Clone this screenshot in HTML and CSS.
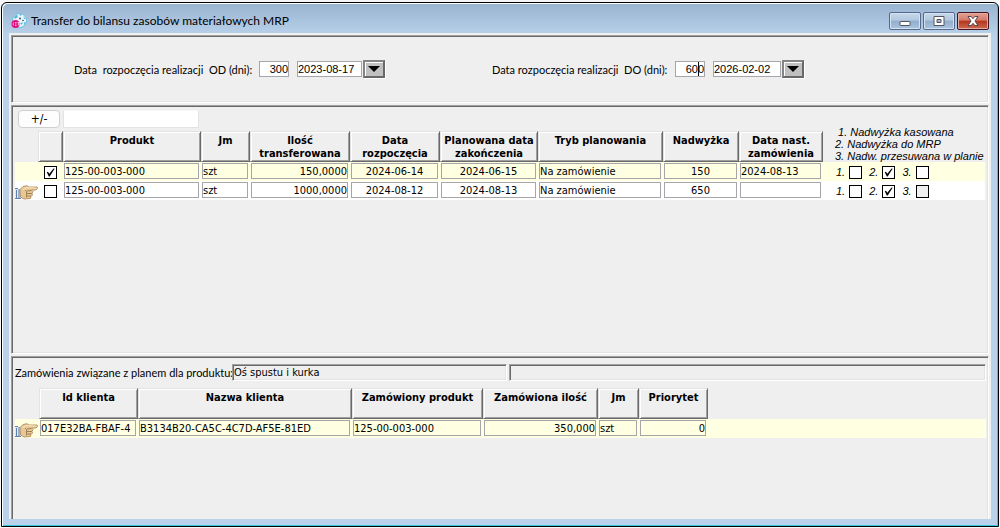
FILE: index.html
```html
<!DOCTYPE html>
<html lang="pl">
<head>
<meta charset="utf-8">
<title>Transfer do bilansu zasobów materiałowych MRP</title>
<link rel="stylesheet" href="styles.css">
</head>
<body>
<svg class="defs" width="0" height="0" aria-hidden="true">
  <symbol id="hand" viewBox="0 0 23 15">
    <rect x="0" y="4" width="7" height="9" fill="#dce8f4"/>
    <path d="M0 3.500H3M0 13.500H6M1.500 5V13M4 4V13" stroke="#5f7fae" fill="none"/>
    <path d="M5 4.500L8 1.500L12 .7L14 2H22L22.500 3.500L21 5H16.500L18 6.500L17 8.500L17.500 10L16 11.500L15.500 13.500L9 14L5.500 12Z" fill="#e6c898" stroke="#a98350" stroke-width=".8"/>
    <path d="M8 4.500L12 2.500L21 3.200" stroke="#fae9c4" fill="none"/>
    <path d="M12 6L16.500 5.500M12 8.500H17M12 11H16M10 5L11.500 6.500V12.500" stroke="#9a7748" stroke-width=".9" fill="none"/>
  </symbol>
  <symbol id="tick" viewBox="0 0 9 9"><path d="M.8 4.200L2 3.800L3.300 5.800L7.600 .5L8.600 .8L3.700 8.500H2.800Z" fill="#000"/></symbol>
</svg>
<main class="window">
  <header class="titlebar">
    <svg class="logo" viewBox="0 0 16 16" aria-hidden="true">
      <circle cx="8.500" cy="7.500" r="7" fill="#eaf6fb" stroke="#69bfdf"/>
      <path d="M3 4L6 1.500L7 4L4 6ZM8 1L11 1.500L9.500 3ZM12.500 3L14.500 6L13 6ZM9 10L12 9.500L11 12ZM13 9.500L14.800 9L13 12.500Z" fill="#58b7dc"/>
      <circle cx="9" cy="5.500" r=".9" fill="#17506b"/><circle cx="12" cy="7.500" r=".8" fill="#17506b"/>
      <circle cx="4.500" cy="11" r="4" fill="#e5097f"/>
      <path d="M2.300 9.500V12.500M4 9.500H5.500M4 11H5.500M4 12.500H5.500M6.500 9.500H8.300M7.400 9.500V12.500" stroke="#fff" stroke-width=".7"/>
    </svg>
    <h1>Transfer do bilansu zasobów materiałowych MRP</h1>
    <div class="controls">
      <button class="ctl" type="button" aria-label="Minimalizuj"><svg viewBox="0 0 12 10"><rect x="1" y="5.500" width="10" height="4" rx=".5" fill="#fff" stroke="#54565e"/></svg></button>
      <button class="ctl" type="button" aria-label="Maksymalizuj"><svg viewBox="0 0 12 10"><path d="M1 .5H11V9.500H1ZM4 3.500V6.500H8V3.500Z" fill="#fff" fill-rule="evenodd" stroke="#54565e"/></svg></button>
      <button class="ctl close" type="button" aria-label="Zamknij"><svg viewBox="0 0 12 10"><path d="M1 .5H4.200L6 2.700L7.800 .5H11L8 5L11 9.500H7.800L6 7.300L4.200 9.500H1L4 5Z" fill="#fff" stroke="#54464e"/></svg></button>
    </div>
  </header>
  <div class="content">
    <section class="panel range">
      <div class="field">
        <label for="od">Data&nbsp; rozpoczęcia realizacji&nbsp; OD (dni):</label>
        <input id="od" class="days" value="300">
        <input class="date" aria-label="Data od" value="2023-08-17">
        <button class="drop" type="button" aria-label="Wybierz datę od"></button>
      </div>
      <div class="field">
        <label for="do" class="to">Data rozpoczęcia realizacji&nbsp; DO (dni):</label>
        <span class="focused"><input id="do" class="days" value="600"><i class="caret"></i></span>
        <input class="date wide" aria-label="Data do" value="2026-02-02">
        <button class="drop" type="button" aria-label="Wybierz datę do"></button>
      </div>
    </section>
    <section class="panel plan">
      <div class="tools">
        <button class="toggle" type="button">+/-</button>
        <input class="search" aria-label="Szukaj produktu">
      </div>
      <table>
        <colgroup><col class="w23"><col class="w25"><col class="w138"><col class="w49"><col class="w100"><col class="w90"><col class="w98"><col class="w125"><col class="w76"><col class="w84"><col></colgroup>
        <thead><tr>
          <td></td>
          <th><div class="head"></div></th>
          <th><div class="head">Produkt</div></th>
          <th><div class="head">Jm</div></th>
          <th><div class="head">Ilość<br>transferowana</div></th>
          <th><div class="head">Data<br>rozpoczęcia</div></th>
          <th><div class="head">Planowana data<br>zakończenia</div></th>
          <th><div class="head">Tryb planowania</div></th>
          <th><div class="head">Nadwyżka</div></th>
          <th><div class="head">Data nast.<br>zamówienia</div></th>
          <td class="legend"><p>&nbsp;1. Nadwyżka kasowana</p><p>2. Nadwyżka do MRP</p><p>3. Nadw. przesuwana w planie</p></td>
        </tr></thead>
        <tbody>
        <tr class="current">
          <td></td>
          <td class="pick"><label class="box"><input type="checkbox" aria-label="Transferuj 125-00-003-000" checked><svg><use href="#tick"/></svg></label></td>
          <td><div class="cell">125-00-003-000</div></td>
          <td><div class="cell">szt</div></td>
          <td><div class="cell num">150,0000</div></td>
          <td><div class="cell mid">2024-06-14</div></td>
          <td><div class="cell mid">2024-06-15</div></td>
          <td><div class="cell">Na zamówienie</div></td>
          <td><div class="cell mid">150</div></td>
          <td><div class="cell">2024-08-13</div></td>
          <td><div class="options">
            <label>1.<span class="box"><input type="checkbox"><svg><use href="#tick"/></svg></span></label>
            <label>2.<span class="box"><input type="checkbox" checked><svg><use href="#tick"/></svg></span></label>
            <label>3.<span class="box"><input type="checkbox"><svg><use href="#tick"/></svg></span></label>
          </div></td>
        </tr>
        <tr class="plain">
          <td><svg class="hand" aria-hidden="true"><use href="#hand"/></svg></td>
          <td class="pick"><label class="box"><input type="checkbox" aria-label="Transferuj 125-00-003-000"><svg><use href="#tick"/></svg></label></td>
          <td><div class="cell">125-00-003-000</div></td>
          <td><div class="cell">szt</div></td>
          <td><div class="cell num">1000,0000</div></td>
          <td><div class="cell mid">2024-08-12</div></td>
          <td><div class="cell mid">2024-08-13</div></td>
          <td><div class="cell">Na zamówienie</div></td>
          <td><div class="cell mid">650</div></td>
          <td><div class="cell"></div></td>
          <td><div class="options">
            <label>1.<span class="box"><input type="checkbox"><svg><use href="#tick"/></svg></span></label>
            <label>2.<span class="box"><input type="checkbox" checked><svg><use href="#tick"/></svg></span></label>
            <label>3.<span class="box"><input type="checkbox" disabled><svg><use href="#tick"/></svg></span></label>
          </div></td>
        </tr>
        </tbody>
      </table>
    </section>
    <section class="panel orders">
      <div class="related">
        <label for="product">Zamówienia związane z planem dla produktu:</label>
        <input id="product" class="sunken" readonly value="Oś spustu i kurka">
        <input class="sunken rest" readonly aria-label="Opis produktu">
      </div>
      <table>
        <colgroup><col class="w24"><col class="w99"><col class="w214"><col class="w131"><col class="w115"><col class="w41"><col class="w69"><col></colgroup>
        <thead><tr>
          <td></td>
          <th><div class="head">Id klienta</div></th>
          <th><div class="head">Nazwa klienta</div></th>
          <th><div class="head">Zamówiony produkt</div></th>
          <th><div class="head">Zamówiona ilość</div></th>
          <th><div class="head">Jm</div></th>
          <th><div class="head">Priorytet</div></th>
          <td></td>
        </tr></thead>
        <tbody><tr class="current">
          <td><svg class="hand" aria-hidden="true"><use href="#hand"/></svg></td>
          <td><div class="cell">017E32BA-FBAF-4</div></td>
          <td><div class="cell">B3134B20-CA5C-4C7D-AF5E-81ED</div></td>
          <td><div class="cell">125-00-003-000</div></td>
          <td><div class="cell num">350,000</div></td>
          <td><div class="cell">szt</div></td>
          <td><div class="cell num">0</div></td>
          <td></td>
        </tr></tbody>
      </table>
    </section>
  </div>
</main>
</body>
</html>
```
FILE: styles.css
```css
* { box-sizing: border-box; }
html, body { height: 100%; }
body {
  margin: 0;
  padding: 2px 1px 1px;
  background: #f4f6f8;
  font: 11px/13px "DejaVu Sans Condensed", "Open Sans", sans-serif;
  color: #000;
}
h1, p { margin: 0; }
button, input { font: inherit; color: inherit; margin: 0; padding: 0; border-radius: 0; min-width: 0; outline: 0; }
.defs { position: absolute; }

.window {
  height: 100%;
  display: flex;
  flex-direction: column;
  padding: 1px 7px 7px;
  border: 1px solid #000;
  border-radius: 6px 6px 0 0;
  background: linear-gradient(#98b3d0, #b9d1ea 32px, #b9d1ea);
  box-shadow: inset 1px 1px #fff, inset -1px -1px #35c7e0;
}
.titlebar { display: flex; align-items: center; height: 29px; padding: 4px 2px 0 2px; }
.logo { width: 16px; height: 16px; }
h1 { flex: 1; margin-left: 4px; font: 12px/16px Lato, sans-serif; }
.controls { display: flex; gap: 2px; }
.ctl {
  width: 32px;
  height: 18px;
  display: grid;
  place-items: center;
  border: 1px solid #56698c;
  border-radius: 2px;
  background: linear-gradient(#c6d7e9, #b3c9e0 45%, #91aeca 50%, #a9c4df);
  box-shadow: inset 0 0 0 1px #d5e3f1;
}
.ctl svg { width: 12px; height: 10px; }
.close {
  border-color: #431422;
  background: linear-gradient(#e2a093, #d57b6b 45%, #b3361f 50%, #cc6a50);
  box-shadow: inset 0 0 0 1px #e4ada0;
}

.content {
  flex: 1;
  display: flex;
  flex-direction: column;
  gap: 2px;
  padding: 2px 2px 0;
  background: #f0f0f0;
  overflow: hidden;
}
.panel {
  border: 1px solid;
  border-color: #a0a0a0 #fff #fff #a0a0a0;
  background: #efefef;
  box-shadow: inset 1px 1px #696969, inset -1px -1px #e3e3e3;
}
.range { display: flex; align-items: center; gap: 107px; padding-left: 62px; min-height: 68px; }
.plan { flex: 240 1 0; padding: 4px 3px 2px; }
.orders { flex: 155 1 0; padding: 7px 2px 0 3px; border-bottom: 0; box-shadow: inset 1px 1px #696969, inset -1px 0 #e3e3e3; }

label { font-family: Lato, sans-serif; }
.field { display: flex; align-items: center; }
.field label { min-width: 179px; margin-right: 6px; white-space: pre; }
.field .to { min-width: 177px; }
.days, .date {
  height: 16px;
  border: 1px solid #a5a5aa;
  background: #fff;
  font: 11px/14px "Liberation Sans", Arial, sans-serif;
}
.days { width: 30px; text-align: right; }
.date { width: 65px; margin-left: 8px; }
.wide { width: 68px; }
.focused { position: relative; display: flex; }
.caret { position: absolute; right: 6px; top: 1px; width: 1px; height: 14px; background: #000; }
.drop {
  width: 22px;
  height: 18px;
  margin-left: 1px;
  display: grid;
  place-items: center;
  border: 2px solid #696969;
  border-color: #848484 #696969 #696969 #848484;
  background: #c0c0c0;
  box-shadow: inset 1px 1px #fff, 1px 1px #fff;
}
.drop::before { content: ""; border: 6px solid transparent; border-top-color: #000; border-bottom: 0; }

.tools { display: flex; gap: 3px; height: 18px; margin: 0 0 -2px 3px; }
.toggle { width: 42px; border: 1px solid #d0d0d0; border-radius: 4px; background: #fdfdfd; font-size: 12px; line-height: 16px; }
.search { width: 136px; border: 1px solid #e3e3e3; border-top-color: #f7f7f7; background: #fff; }

table { width: 100%; table-layout: fixed; border-collapse: collapse; }
th, td { padding: 0; vertical-align: top; font-weight: normal; text-align: left; }
th { vertical-align: bottom; }
.head {
  height: 31px;
  padding-top: 2px;
  border: 1px solid;
  border-color: #e3e3e3 #696969 #696969 #e3e3e3;
  box-shadow: inset 1px 1px #fff, inset -1px -1px #a0a0a0;
  font-weight: bold;
  text-align: center;
  white-space: nowrap;
}
.legend { padding-left: 12px; font: italic 11px/12px "Liberation Sans", Arial, sans-serif; white-space: nowrap; }
tbody tr { height: 19px; }
.current { background: #ffffe1; }
.plain { background: #fff; }
.cell {
  height: 16px;
  margin: 1px 2px 0 1px;
  border: 1px solid #a5a5aa;
  line-height: 16px;
  white-space: nowrap;
  overflow: hidden;
}
.num { text-align: right; }
.mid { text-align: center; }
.hand { display: block; width: 23px; height: 15px; margin-top: 4px; }
.pick { padding: 4px 0 0 6px; }
.box { position: relative; display: block; width: 13px; height: 13px; }
.box input { display: block; appearance: none; width: 13px; height: 13px; border: 1px solid #000; background: #fff; }
.box input:disabled { background: #efefef; }
.box svg { position: absolute; left: 2px; top: 2px; width: 9px; height: 9px; visibility: hidden; pointer-events: none; }
.box input:checked + svg { visibility: visible; }
.options { display: flex; gap: 7px; padding: 4px 0 0 13px; }
.options label { display: flex; gap: 4px; font: italic 11px/13px "Liberation Sans", Arial, sans-serif; }

.related { display: flex; align-items: center; margin-bottom: 7px; }
.related label { width: 214px; margin-right: 3px; white-space: nowrap; }
.sunken {
  width: 275px;
  height: 17px;
  margin-right: 2px;
  padding-left: 1px;
  border: 1px solid;
  border-color: #a0a0a0 #fff #fff #a0a0a0;
  background: #efefef;
  box-shadow: inset 1px 1px #696969, inset -1px -1px #e3e3e3;
}
.rest { flex: 1; margin-right: 0; }

.w23 { width: 23px; } .w24 { width: 24px; } .w25 { width: 25px; } .w41 { width: 41px; }
.w49 { width: 49px; } .w69 { width: 69px; } .w76 { width: 76px; } .w84 { width: 84px; }
.w90 { width: 90px; } .w98 { width: 98px; } .w99 { width: 99px; } .w100 { width: 100px; }
.w115 { width: 115px; } .w125 { width: 125px; } .w131 { width: 131px; } .w138 { width: 138px; }
.w214 { width: 214px; }
```
